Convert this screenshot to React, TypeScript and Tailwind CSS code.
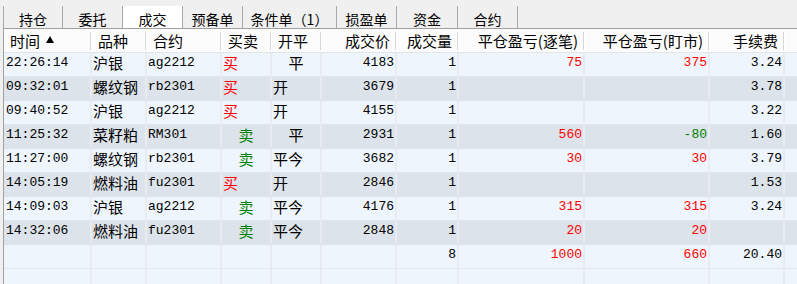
import React from "react";

const CJK = { fontFamily: '"Noto Sans CJK SC", "Noto Sans", sans-serif' };
const MONO = { fontFamily: '"Liberation Mono", "Noto Sans CJK SC", monospace' };

const tabs = [
  { label: "持仓", w: 60 },
  { label: "委托", w: 60 },
  { label: "成交", w: 60, active: true },
  { label: "预备单", w: 60 },
  { label: "条件单（1）", w: 94 },
  { label: "损盈单", w: 60 },
  { label: "资金", w: 61 },
  { label: "合约", w: 60 },
];

const widths = [88, 55, 75, 50, 50, 75, 62, 126, 125, 75];

type Cell = { t: string; c?: string; a?: "l" | "r" | "c"; cjk?: boolean };

const R = "text-[#ff0000]";
const G = "text-[#008000]";

const mk = (
  time: string,
  name: string,
  code: string,
  bs: "买" | "卖" | "",
  kp: string,
  price: string,
  qty: string,
  p1: string,
  p2: string,
  fee: string,
  p2c?: string
): Cell[] => [
  { t: time },
  { t: name, cjk: true },
  { t: code },
  { t: bs, cjk: true, c: bs === "买" ? R : G, a: bs === "卖" ? "c" : "l" },
  { t: kp, cjk: true, a: kp === "平" ? "c" : "l" },
  { t: price, a: "r" },
  { t: qty, a: "r" },
  { t: p1, a: "r", c: R },
  { t: p2, a: "r", c: p2c ?? R },
  { t: fee, a: "r" },
];

const rows: Cell[][] = [
  mk("22:26:14", "沪银", "ag2212", "买", "平", "4183", "1", "75", "375", "3.24"),
  mk("09:32:01", "螺纹钢", "rb2301", "买", "开", "3679", "1", "", "", "3.78"),
  mk("09:40:52", "沪银", "ag2212", "买", "开", "4155", "1", "", "", "3.22"),
  mk("11:25:32", "菜籽粕", "RM301", "卖", "平", "2931", "1", "560", "-80", "1.60", G),
  mk("11:27:00", "螺纹钢", "rb2301", "卖", "平今", "3682", "1", "30", "30", "3.79"),
  mk("14:05:19", "燃料油", "fu2301", "买", "开", "2846", "1", "", "", "1.53"),
  mk("14:09:03", "沪银", "ag2212", "卖", "平今", "4176", "1", "315", "315", "3.24"),
  mk("14:32:06", "燃料油", "fu2301", "卖", "平今", "2848", "1", "20", "20", ""),
  mk("", "", "", "", "", "", "8", "1000", "660", "20.40"),
  mk("", "", "", "", "", "", "", "", "", ""),
];

const headers: { t: string; a: "l" | "r" }[] = [
  { t: "时间", a: "l" },
  { t: "品种", a: "l" },
  { t: "合约", a: "l" },
  { t: "买卖", a: "l" },
  { t: "开平", a: "l" },
  { t: "成交价", a: "r" },
  { t: "成交量", a: "r" },
  { t: "平仓盈亏(逐笔)", a: "r" },
  { t: "平仓盈亏(盯市)", a: "r" },
  { t: "手续费", a: "r" },
];

export default function App() {
  return (
    <div className="w-[797px] h-[284px] bg-[#f0f0f0] overflow-hidden flex flex-col">
      {/* tab bar */}
      <div className="h-[28px] pt-[6px] pl-[3px] flex shrink-0">
        {tabs.map((tb) => (
          <div
            key={tb.label}
            style={{ width: tb.w, ...CJK }}
            className={`h-[22px] flex items-center justify-center pt-[3px] text-[14px] leading-none text-black border-r border-[#a8a8a8] ${
              tb.active ? "bg-white" : "bg-[#f0f0f0]"
            } ${tb.label === "持仓" ? "border-l" : ""}`}
          >
            {tb.label}
          </div>
        ))}
      </div>
      {/* table */}
      <div className="flex-1 ml-[3px] border-l border-t border-[#a0a0a0] bg-[#eef5fd] flex flex-col">
        {/* header */}
        <div className="h-[24px] flex shrink-0 bg-[#fcfcfc] border-b border-[#e2e6eb]">
          {headers.map((h, i) => (
            <div
              key={h.t}
              style={{ width: widths[i], ...CJK }}
              className={`h-full flex items-center text-[15px] leading-none text-black relative ${
                h.a === "r" ? "justify-end pr-[7px]" : "justify-start pl-[6px]"
              }`}
            >
              <span>{h.t}</span>
              {i === 0 && (
                <svg width="8" height="7" viewBox="0 0 8 7" className="ml-[6px] mb-[2px]">
                  <polygon points="4,0 8,7 0,7" fill="#000" />
                </svg>
              )}
              <div className="absolute right-0 top-[3px] bottom-[2px] w-[2px] bg-[#d6d6d6] border-r border-white" />
            </div>
          ))}
          <div className="flex-1" />
        </div>
        {/* rows */}
        {rows.map((r, ri) => (
          <div
            key={ri}
            className={`h-[24px] flex shrink-0 border-b ${
              ri % 2 === 1 && ri < 8
                ? "bg-[#dde3ea] border-[#dde3ea]"
                : "bg-[#eef5fd] border-[#e3e8ee]"
            }`}
          >
            {r.map((c, ci) => (
              <div
                key={ci}
                style={{ width: widths[ci], ...(c.cjk ? CJK : MONO) }}
                className={`h-full flex items-center pb-[4px] border-r-2 border-[#e8ecf1] leading-none whitespace-nowrap ${
                  c.cjk ? "text-[15px]" : "text-[13px]"
                } ${c.c ?? "text-black"} ${
                  c.a === "r"
                    ? "justify-end pr-[1px]"
                    : c.a === "c"
                    ? "justify-center"
                    : "justify-start pl-[1px]"
                } ${ci === 0 ? "pl-[2px]" : ""}`}
              >
                {c.t}
              </div>
            ))}
            <div className="flex-1" />
          </div>
        ))}
      </div>
    </div>
  );
}
